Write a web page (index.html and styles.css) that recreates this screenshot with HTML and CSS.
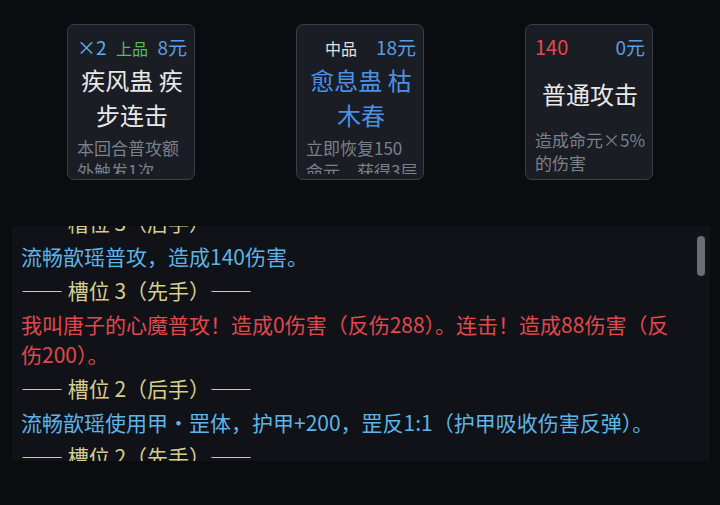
FILE: index.html
```html
<!DOCTYPE html>
<html lang="zh">
<head>
<meta charset="utf-8">
<link rel="stylesheet" href="styles.css">
</head>
<body>
<div class="cards">
  <div class="card">
    <div class="card-top">
      <span class="count">×2</span>
      <span class="grade grade-high">上品</span>
      <span class="price">8元</span>
    </div>
    <div class="card-title">疾风蛊 疾步连击</div>
    <div class="card-desc">本回合普攻额外触发1次</div>
  </div>
  <div class="card">
    <div class="card-top">
      <span class="count"></span>
      <span class="grade grade-mid">中品</span>
      <span class="price">18元</span>
    </div>
    <div class="card-title card-title-blue">愈息蛊 枯木春</div>
    <div class="card-desc">立即恢复150命元，获得3层</div>
  </div>
  <div class="card">
    <div class="card-top">
      <span class="dmg">140</span>
      <span class="price">0元</span>
    </div>
    <div class="card-title">普通攻击</div>
    <div class="card-desc">造成命元×5%的伤害</div>
  </div>
</div>

<div class="log">
  <div class="log-inner">
    <div class="sep">—— 槽位 3（后手）——</div>
    <div class="entry ally">流畅歆瑶普攻，造成140伤害。</div>
    <div class="sep">—— 槽位 3（先手）——</div>
    <div class="entry enemy">我叫唐子的心魔普攻！造成0伤害（反伤288）。连击！造成88伤害（反伤200）。</div>
    <div class="sep">—— 槽位 2（后手）——</div>
    <div class="entry ally">流畅歆瑶使用甲・罡体，护甲+200，罡反1:1（护甲吸收伤害反弹）。</div>
    <div class="sep">—— 槽位 2（先手）——</div>
  </div>
  <div class="scroll-thumb"></div>
</div>
</body>
</html>
```

FILE: styles.css
```css
html, body {
  margin: 0;
  padding: 0;
  background: #0b0c10;
  font-family: "Noto Sans CJK SC", "Noto Sans", sans-serif;
}

body {
  width: 720px;
  height: 505px;
  overflow: hidden;
}

.cards {
  display: flex;
  justify-content: center;
  gap: 101px;
  padding-top: 24px;
}

.card {
  box-sizing: border-box;
  width: 128px;
  height: 156px;
  border: 1px solid #3a3e48;
  border-radius: 7px;
  background: #1a1d24;
  padding: 11px 7px 5px 9px;
  display: flex;
  flex-direction: column;
  justify-content: space-between;
  gap: 4px;
  overflow: hidden;
}

.card-top,
.card-title {
  flex-shrink: 0;
}

.card-top {
  display: flex;
  justify-content: space-between;
  align-items: baseline;
  height: 22px;
  line-height: 22px;
  font-size: 19px;
}

.count {
  color: #56b2e6;
}

.price {
  color: #5a9de2;
}

.dmg {
  color: #e04a4c;
  font-size: 20px;
}

.grade {
  font-size: 16px;
}

.grade-high {
  color: #5cb85e;
}

.grade-mid {
  color: #e2e2e2;
}

.card-title {
  font-size: 24px;
  line-height: 35px;
  color: #e8e8e8;
  text-align: center;
}

.card-title-blue {
  color: #4b90e4;
}

.card-desc {
  flex: 0 1 auto;
  min-height: 0;
  overflow: hidden;
  margin-right: -2px;
  font-size: 17px;
  line-height: 23px;
  color: #7b8089;
}

.log {
  position: relative;
  margin: 46px 10px 0 12px;
  height: 235px;
  background: #111217;
  overflow: hidden;
}

.log-inner {
  margin-top: -19px;
  padding: 0 24px 0 9px;
  display: flex;
  flex-direction: column;
  gap: 4px;
  font-size: 21px;
  line-height: 30px;
}

.sep {
  color: #d6ce90;
}

.ally {
  color: #5cb4e8;
}

.enemy {
  color: #e0484d;
}

.scroll-thumb {
  position: absolute;
  right: 5px;
  top: 10px;
  width: 8px;
  height: 40px;
  border-radius: 4px;
  background: #6a6d73;
}
```
